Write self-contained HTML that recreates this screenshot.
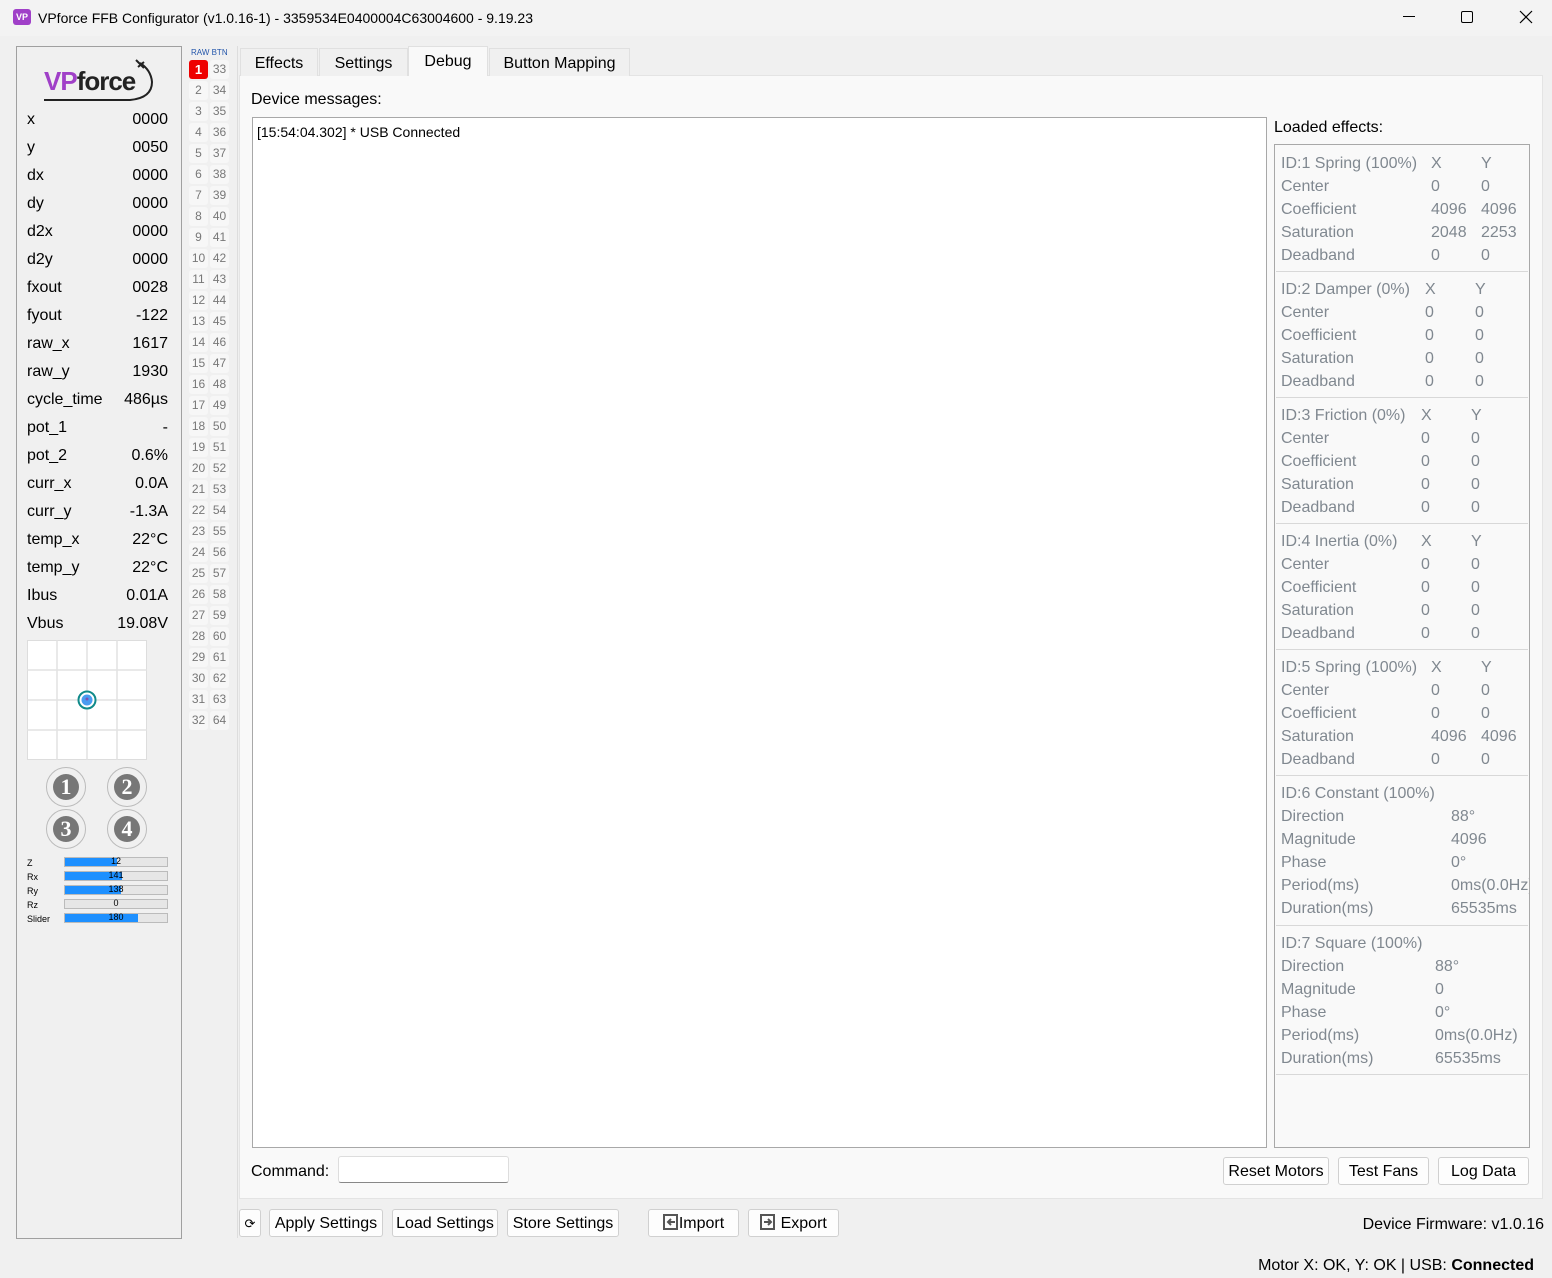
<!DOCTYPE html>
<html><head><meta charset="utf-8">
<style>
*{margin:0;padding:0;box-sizing:border-box}
body{width:1552px;height:1278px;background:#f0f0f0;font-family:"Liberation Sans",sans-serif;color:#000;position:relative;overflow:hidden;font-size:16px}
.a{position:absolute;white-space:nowrap}
#title{left:0;top:0;width:1552px;height:36px;background:#f3f3f3}
#left{left:16px;top:46px;width:166px;height:1193px;border:1px solid #a0a0a0;background:#f0f0f0}
.lab{left:27px;font-size:16px;margin-top:1px}
.val{right:1384px;font-size:16px;text-align:right;margin-top:1px}
.bn{width:19px;height:19px;background:#f7f7f7;border-radius:3px;font-size:12px;color:#777;text-align:center;line-height:19px;margin-top:1px}
.bar{left:64px;width:104px;height:10px;background:#e6e6e6;border:1px solid #bbb}
.bar i{position:absolute;left:0;top:0;bottom:0;background:#1e90ff}
.bar span{position:absolute;left:0;right:0;top:-2px;text-align:center;font-size:9px}
.bl{left:27px;font-size:9px}
.tab{top:48px;height:28px;background:#f0f0f0;border:1px solid #e0e0e0;border-bottom:none;font-size:16px;text-align:center;line-height:30px}
.btn{height:28px;background:#fdfdfd;border:1px solid #d0d0d0;border-radius:3px;font-size:16px;text-align:center;line-height:28px}
.g{left:1281px;font-size:16px;color:#808890;line-height:23px;margin-top:1px}
.sep{left:1276px;width:252px;height:1px;background:#d8d8d8}
.circ{width:40px;height:40px;border:1px solid #bbb;border-radius:50%;}
.circ b{position:absolute;left:6px;top:6px;width:26px;height:26px;border-radius:50%;background:#777;color:#fff;font-family:"Liberation Serif",serif;font-size:22px;text-align:center;line-height:26px}
</style></head><body>
<div id="title" class="a"></div>
<div class="a" style="left:13px;top:9px;width:18px;height:16px;background:#a040c8;border-radius:3px;color:#fff;font-size:9px;line-height:16px;text-align:center;font-weight:bold">VP</div>
<div class="a" style="left:38px;top:10px;font-size:14px">VPforce FFB Configurator (v1.0.16-1) - 3359534E0400004C63004600 - 9.19.23</div>
<div class="a" style="left:1403px;top:16px;width:12px;height:1px;background:#000"></div>
<div class="a" style="left:1461px;top:11px;width:12px;height:12px;border:1px solid #000;border-radius:2px"></div>
<svg class="a" style="left:1519px;top:10px" width="14" height="14"><path d="M1 1L13 13M13 1L1 13" stroke="#000" stroke-width="1.2"/></svg>

<div id="left" class="a"></div>
<div class="a" style="left:44px;top:66px;font-size:26px;font-weight:bold;letter-spacing:-1px"><span style="color:#a040c8">VP</span><span style="color:#222">force</span></div>
<svg class="a" style="left:40px;top:58px" width="116" height="46"><path d="M4 42 H90 Q112 40 112 24 Q111 12 100 5" fill="none" stroke="#222" stroke-width="2"/><path d="M96 2 L104 10 M98 9 L104 4" stroke="#222" stroke-width="2"/></svg>

<div class="a lab" style="top:110px">x</div><div class="a val" style="top:110px">0000</div>
<div class="a lab" style="top:138px">y</div><div class="a val" style="top:138px">0050</div>
<div class="a lab" style="top:166px">dx</div><div class="a val" style="top:166px">0000</div>
<div class="a lab" style="top:194px">dy</div><div class="a val" style="top:194px">0000</div>
<div class="a lab" style="top:222px">d2x</div><div class="a val" style="top:222px">0000</div>
<div class="a lab" style="top:250px">d2y</div><div class="a val" style="top:250px">0000</div>
<div class="a lab" style="top:278px">fxout</div><div class="a val" style="top:278px">0028</div>
<div class="a lab" style="top:306px">fyout</div><div class="a val" style="top:306px">-122</div>
<div class="a lab" style="top:334px">raw_x</div><div class="a val" style="top:334px">1617</div>
<div class="a lab" style="top:362px">raw_y</div><div class="a val" style="top:362px">1930</div>
<div class="a lab" style="top:390px">cycle_time</div><div class="a val" style="top:390px">486µs</div>
<div class="a lab" style="top:418px">pot_1</div><div class="a val" style="top:418px">-</div>
<div class="a lab" style="top:446px">pot_2</div><div class="a val" style="top:446px">0.6%</div>
<div class="a lab" style="top:474px">curr_x</div><div class="a val" style="top:474px">0.0A</div>
<div class="a lab" style="top:502px">curr_y</div><div class="a val" style="top:502px">-1.3A</div>
<div class="a lab" style="top:530px">temp_x</div><div class="a val" style="top:530px">22°C</div>
<div class="a lab" style="top:558px">temp_y</div><div class="a val" style="top:558px">22°C</div>
<div class="a lab" style="top:586px">Ibus</div><div class="a val" style="top:586px">0.01A</div>
<div class="a lab" style="top:614px">Vbus</div><div class="a val" style="top:614px">19.08V</div>

<svg class="a" style="left:27px;top:640px" width="121" height="121"><rect x="0.5" y="0.5" width="119" height="119" fill="#fff" stroke="#ddd"/><path d="M30 0V120M60 0V120M90 0V120M0 30H120M0 60H120M0 90H120" stroke="#e2e2e2" stroke-width="1.5"/><circle cx="60" cy="60" r="8.5" fill="#fff" stroke="#108a8a" stroke-width="2"/><circle cx="60" cy="60" r="5.5" fill="#4a9cf0"/><circle cx="60" cy="59" r="1.5" fill="#8050b0"/></svg>

<div class="a circ" style="left:46px;top:767px"><b>1</b></div>
<div class="a circ" style="left:107px;top:767px"><b>2</b></div>
<div class="a circ" style="left:46px;top:809px"><b>3</b></div>
<div class="a circ" style="left:107px;top:809px"><b>4</b></div>

<div class="a bl" style="top:858px">Z</div><div class="a bar" style="top:857px"><i style="width:52px"></i><span>12</span></div>
<div class="a bl" style="top:872px">Rx</div><div class="a bar" style="top:871px"><i style="width:57px"></i><span>141</span></div>
<div class="a bl" style="top:886px">Ry</div><div class="a bar" style="top:885px"><i style="width:56px"></i><span>138</span></div>
<div class="a bl" style="top:900px">Rz</div><div class="a bar" style="top:899px"><span>0</span></div>
<div class="a bl" style="top:914px">Slider</div><div class="a bar" style="top:913px"><i style="width:73px"></i><span>180</span></div>

<div class="a" style="left:191px;top:48px;font-size:8px;color:#2255aa">RAW BTN</div>
<div class="a" style="left:237px;top:46px;width:1px;height:1192px;background:#ddd"></div>
<div class="a bn" style="left:189px;top:59px;background:#e00;color:#fff;font-weight:bold;font-size:13px">1</div><div class="a bn" style="left:210px;top:59px">33</div>
<div class="a bn" style="left:189px;top:80px">2</div><div class="a bn" style="left:210px;top:80px">34</div>
<div class="a bn" style="left:189px;top:101px">3</div><div class="a bn" style="left:210px;top:101px">35</div>
<div class="a bn" style="left:189px;top:122px">4</div><div class="a bn" style="left:210px;top:122px">36</div>
<div class="a bn" style="left:189px;top:143px">5</div><div class="a bn" style="left:210px;top:143px">37</div>
<div class="a bn" style="left:189px;top:164px">6</div><div class="a bn" style="left:210px;top:164px">38</div>
<div class="a bn" style="left:189px;top:185px">7</div><div class="a bn" style="left:210px;top:185px">39</div>
<div class="a bn" style="left:189px;top:206px">8</div><div class="a bn" style="left:210px;top:206px">40</div>
<div class="a bn" style="left:189px;top:227px">9</div><div class="a bn" style="left:210px;top:227px">41</div>
<div class="a bn" style="left:189px;top:248px">10</div><div class="a bn" style="left:210px;top:248px">42</div>
<div class="a bn" style="left:189px;top:269px">11</div><div class="a bn" style="left:210px;top:269px">43</div>
<div class="a bn" style="left:189px;top:290px">12</div><div class="a bn" style="left:210px;top:290px">44</div>
<div class="a bn" style="left:189px;top:311px">13</div><div class="a bn" style="left:210px;top:311px">45</div>
<div class="a bn" style="left:189px;top:332px">14</div><div class="a bn" style="left:210px;top:332px">46</div>
<div class="a bn" style="left:189px;top:353px">15</div><div class="a bn" style="left:210px;top:353px">47</div>
<div class="a bn" style="left:189px;top:374px">16</div><div class="a bn" style="left:210px;top:374px">48</div>
<div class="a bn" style="left:189px;top:395px">17</div><div class="a bn" style="left:210px;top:395px">49</div>
<div class="a bn" style="left:189px;top:416px">18</div><div class="a bn" style="left:210px;top:416px">50</div>
<div class="a bn" style="left:189px;top:437px">19</div><div class="a bn" style="left:210px;top:437px">51</div>
<div class="a bn" style="left:189px;top:458px">20</div><div class="a bn" style="left:210px;top:458px">52</div>
<div class="a bn" style="left:189px;top:479px">21</div><div class="a bn" style="left:210px;top:479px">53</div>
<div class="a bn" style="left:189px;top:500px">22</div><div class="a bn" style="left:210px;top:500px">54</div>
<div class="a bn" style="left:189px;top:521px">23</div><div class="a bn" style="left:210px;top:521px">55</div>
<div class="a bn" style="left:189px;top:542px">24</div><div class="a bn" style="left:210px;top:542px">56</div>
<div class="a bn" style="left:189px;top:563px">25</div><div class="a bn" style="left:210px;top:563px">57</div>
<div class="a bn" style="left:189px;top:584px">26</div><div class="a bn" style="left:210px;top:584px">58</div>
<div class="a bn" style="left:189px;top:605px">27</div><div class="a bn" style="left:210px;top:605px">59</div>
<div class="a bn" style="left:189px;top:626px">28</div><div class="a bn" style="left:210px;top:626px">60</div>
<div class="a bn" style="left:189px;top:647px">29</div><div class="a bn" style="left:210px;top:647px">61</div>
<div class="a bn" style="left:189px;top:668px">30</div><div class="a bn" style="left:210px;top:668px">62</div>
<div class="a bn" style="left:189px;top:689px">31</div><div class="a bn" style="left:210px;top:689px">63</div>
<div class="a bn" style="left:189px;top:710px">32</div><div class="a bn" style="left:210px;top:710px">64</div>

<div class="a" style="left:239px;top:75px;width:1304px;height:1124px;background:#f9f9f9;border:1px solid #e4e4e4"></div>
<div class="a tab" style="left:240px;width:78px">Effects</div>
<div class="a tab" style="left:319px;width:89px">Settings</div>
<div class="a tab" style="left:408px;top:46px;height:30px;width:80px;background:#f9f9f9">Debug</div>
<div class="a tab" style="left:489px;width:141px">Button Mapping</div>

<div class="a" style="left:251px;top:91px">Device messages:</div>
<div class="a" style="left:252px;top:117px;width:1015px;height:1031px;background:#fff;border:1px solid #a8a8a8"></div>
<div class="a" style="left:257px;top:124px;font-size:14px">[15:54:04.302] * USB Connected</div>

<div class="a" style="left:1274px;top:119px">Loaded effects:</div>
<div class="a" style="left:1274px;top:144px;width:256px;height:1004px;background:#f9f9f9;border:1px solid #a8a8a8"></div>

<div class="a g" style="top:151px">ID:1 Spring (100%)<br>Center<br>Coefficient<br>Saturation<br>Deadband</div>
<div class="a g" style="top:151px;left:1431px">X<br>0<br>4096<br>2048<br>0</div>
<div class="a g" style="top:151px;left:1481px">Y<br>0<br>4096<br>2253<br>0</div>
<div class="a sep" style="top:271px"></div>
<div class="a g" style="top:277px">ID:2 Damper (0%)<br>Center<br>Coefficient<br>Saturation<br>Deadband</div>
<div class="a g" style="top:277px;left:1425px">X<br>0<br>0<br>0<br>0</div>
<div class="a g" style="top:277px;left:1475px">Y<br>0<br>0<br>0<br>0</div>
<div class="a sep" style="top:397px"></div>
<div class="a g" style="top:403px">ID:3 Friction (0%)<br>Center<br>Coefficient<br>Saturation<br>Deadband</div>
<div class="a g" style="top:403px;left:1421px">X<br>0<br>0<br>0<br>0</div>
<div class="a g" style="top:403px;left:1471px">Y<br>0<br>0<br>0<br>0</div>
<div class="a sep" style="top:523px"></div>
<div class="a g" style="top:529px">ID:4 Inertia (0%)<br>Center<br>Coefficient<br>Saturation<br>Deadband</div>
<div class="a g" style="top:529px;left:1421px">X<br>0<br>0<br>0<br>0</div>
<div class="a g" style="top:529px;left:1471px">Y<br>0<br>0<br>0<br>0</div>
<div class="a sep" style="top:649px"></div>
<div class="a g" style="top:655px">ID:5 Spring (100%)<br>Center<br>Coefficient<br>Saturation<br>Deadband</div>
<div class="a g" style="top:655px;left:1431px">X<br>0<br>0<br>4096<br>0</div>
<div class="a g" style="top:655px;left:1481px">Y<br>0<br>0<br>4096<br>0</div>
<div class="a sep" style="top:775px"></div>
<div class="a g" style="top:781px">ID:6 Constant (100%)<br>Direction<br>Magnitude<br>Phase<br>Period(ms)<br>Duration(ms)</div>
<div class="a g" style="top:781px;left:1451px;width:78px;overflow:hidden"><br>88°<br>4096<br>0°<br>0ms(0.0Hz)<br>65535ms</div>
<div class="a sep" style="top:925px"></div>
<div class="a g" style="top:931px">ID:7 Square (100%)<br>Direction<br>Magnitude<br>Phase<br>Period(ms)<br>Duration(ms)</div>
<div class="a g" style="top:931px;left:1435px"><br>88°<br>0<br>0°<br>0ms(0.0Hz)<br>65535ms</div>
<div class="a sep" style="top:1074px"></div>

<div class="a" style="left:251px;top:1163px">Command:</div>
<div class="a" style="left:338px;top:1156px;width:171px;height:27px;background:#fff;border:1px solid #ddd;border-bottom:1px solid #888;border-radius:3px"></div>
<div class="a btn" style="left:1223px;top:1157px;width:106px">Reset Motors</div>
<div class="a btn" style="left:1338px;top:1157px;width:91px">Test Fans</div>
<div class="a btn" style="left:1438px;top:1157px;width:91px">Log Data</div>

<div class="a btn" style="left:239px;top:1209px;width:22px;font-size:13px">⟳</div>
<div class="a btn" style="left:269px;top:1209px;width:114px">Apply Settings</div>
<div class="a btn" style="left:392px;top:1209px;width:106px">Load Settings</div>
<div class="a btn" style="left:507px;top:1209px;width:112px">Store Settings</div>
<div class="a btn" style="left:648px;top:1209px;width:91px"><svg width="16" height="16" style="vertical-align:-2px"><rect x="1" y="1" width="13" height="14" fill="none" stroke="#555" stroke-width="2"/><path d="M12 8H5M8 5L5 8L8 11" stroke="#555" stroke-width="2" fill="none"/></svg>Import</div>
<div class="a btn" style="left:748px;top:1209px;width:91px"><svg width="16" height="16" style="vertical-align:-2px"><rect x="1" y="1" width="13" height="14" fill="none" stroke="#555" stroke-width="2"/><path d="M4 8H11M8 5L11 8L8 11" stroke="#555" stroke-width="2" fill="none"/></svg> Export</div>

<div class="a" style="right:8px;top:1216px">Device Firmware:&nbsp;v1.0.16</div>
<div class="a" style="right:18px;top:1257px">Motor X: OK, Y: OK | USB: <b>Connected</b></div>
</body></html>
